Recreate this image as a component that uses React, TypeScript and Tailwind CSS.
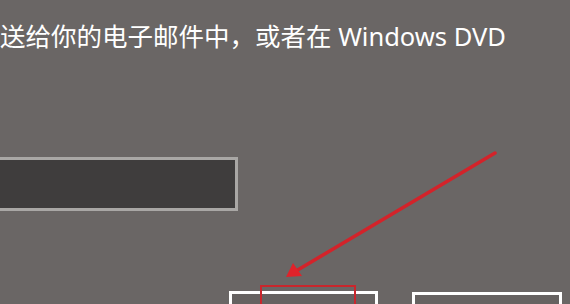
export default function App() {
  return (
    <div className="relative w-[570px] h-[304px] overflow-hidden bg-[#6a6665] font-['Noto_Sans','Noto_Sans_CJK_SC',sans-serif] text-white">
      <p className="pt-[20px] text-[25.5px] leading-[33px] whitespace-nowrap">
        送给你的电子邮件中，或者在 Windows DVD
      </p>

      {/* product key field, runs off the left edge */}
      <div className="mt-[104px] -ml-[10px] w-[248px] h-[54px] border-[3px] border-[#a9a7a5] bg-[#3f3d3d]" />

      {/* buttons */}
      <div className="flex gap-[34px] mt-[80px] ml-[229px]">
        <div className="w-[149px] h-[30px] border-[3px] border-white bg-[#666261]" />
        <div className="mt-[1px] w-[150px] h-[30px] border-[3px] border-white bg-[#666261]" />
      </div>

      {/* red annotation: highlight box + arrow */}
      <div className="absolute left-[260px] top-[285px] w-[96px] h-[30px] border-2 border-[#c9262c]" />
      <svg className="absolute inset-0" width="570" height="304" viewBox="0 0 570 304">
        <line x1="495" y1="153" x2="296" y2="271" stroke="#d3232a" strokeWidth="3.5" strokeLinecap="round" />
        <path d="M286 277 L293 263 L302 276 Z" fill="#e0222a" />
      </svg>
    </div>
  );
}
